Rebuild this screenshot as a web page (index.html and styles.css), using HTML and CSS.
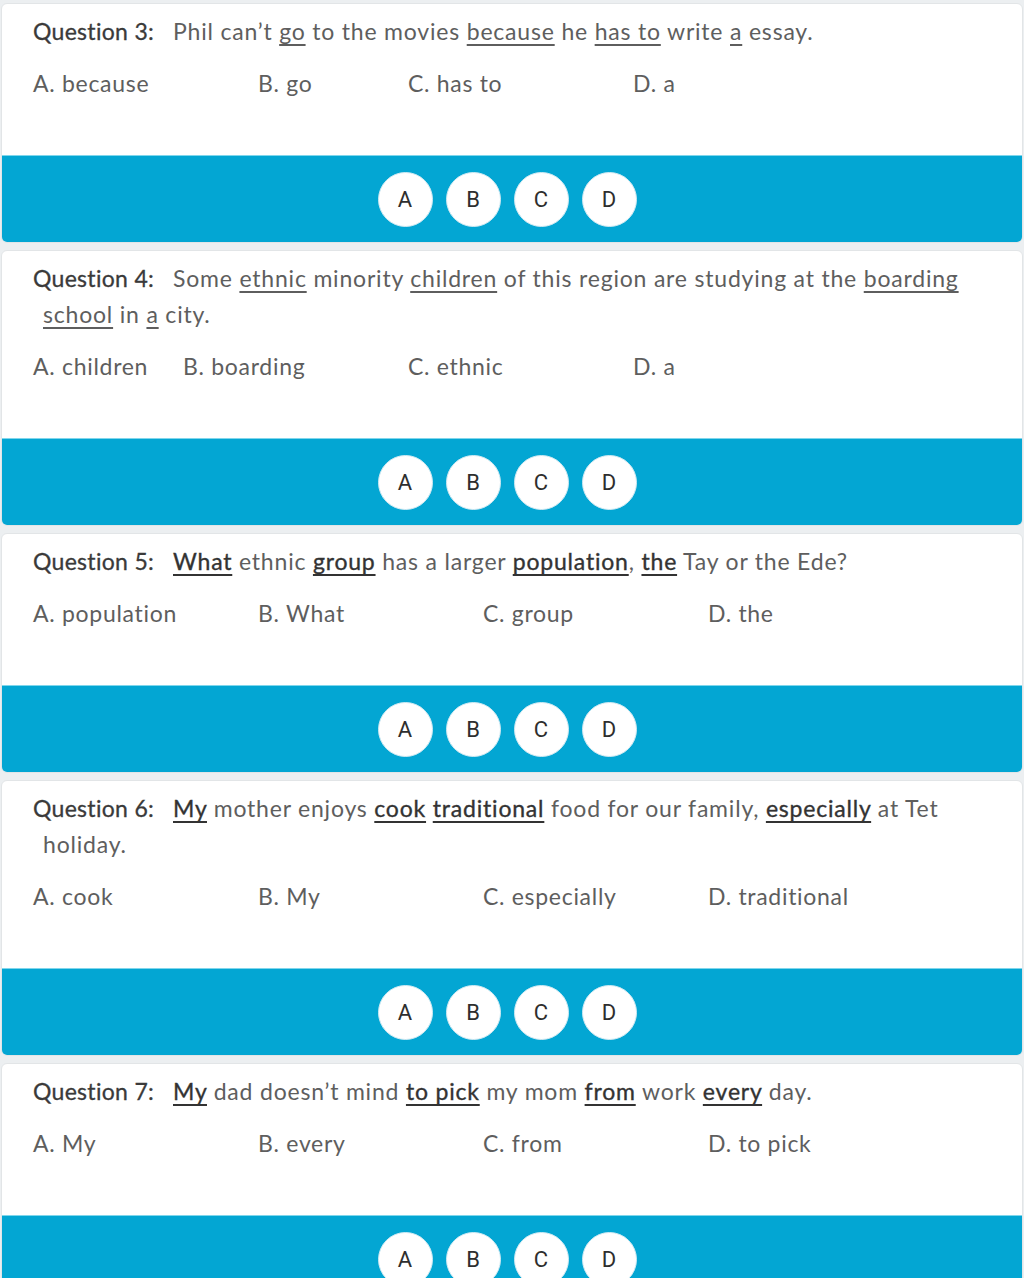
FILE: index.html
```html
<!DOCTYPE html>
<html lang="en">
<head>
<meta charset="utf-8">
<title>Quiz</title>
<link rel="stylesheet" href="styles.css">
</head>
<body>
<div class="list">
  <section class="card">
    <div class="body">
      <p class="q"><span class="label">Question 3:</span>Phil can’t <span class="u">go</span> to the movies <span class="u">because</span> he <span class="u">has to</span> write <span class="u">a</span> essay.</p>
      <div class="opts">
        <span class="opt c1">A. because</span>
        <span class="opt c4">B. go</span>
        <span class="opt c6">C. has to</span>
        <span class="opt c9">D. a</span>
      </div>
    </div>
    <div class="bar">
      <span class="btn">A</span><span class="btn">B</span><span class="btn">C</span><span class="btn">D</span>
    </div>
  </section>

  <section class="card">
    <div class="body">
      <p class="q"><span class="label">Question 4:</span>Some <span class="u">ethnic</span> minority <span class="u">children</span> of this region are studying at the <span class="u">boarding</span> <span class="u">school</span> in <span class="u">a</span> city.</p>
      <div class="opts">
        <span class="opt c1">A. children</span>
        <span class="opt c3">B. boarding</span>
        <span class="opt c6">C. ethnic</span>
        <span class="opt c9">D. a</span>
      </div>
    </div>
    <div class="bar">
      <span class="btn">A</span><span class="btn">B</span><span class="btn">C</span><span class="btn">D</span>
    </div>
  </section>

  <section class="card">
    <div class="body">
      <p class="q"><span class="label">Question 5:</span><span class="ud">What</span> ethnic <span class="ud">group</span> has a larger <span class="ud">population</span>, <span class="ud">the</span> Tay or the Ede?</p>
      <div class="opts">
        <span class="opt c1">A. population</span>
        <span class="opt c4">B. What</span>
        <span class="opt c7">C. group</span>
        <span class="opt c10">D. the</span>
      </div>
    </div>
    <div class="bar">
      <span class="btn">A</span><span class="btn">B</span><span class="btn">C</span><span class="btn">D</span>
    </div>
  </section>

  <section class="card">
    <div class="body">
      <p class="q"><span class="label">Question 6:</span><span class="ud">My</span> mother enjoys <span class="ud">cook</span> <span class="ud">traditional</span> food for our family, <span class="ud">especially</span> at Tet holiday.</p>
      <div class="opts">
        <span class="opt c1">A. cook</span>
        <span class="opt c4">B. My</span>
        <span class="opt c7">C. especially</span>
        <span class="opt c10">D. traditional</span>
      </div>
    </div>
    <div class="bar">
      <span class="btn">A</span><span class="btn">B</span><span class="btn">C</span><span class="btn">D</span>
    </div>
  </section>

  <section class="card">
    <div class="body">
      <p class="q"><span class="label">Question 7:</span><span class="ud">My</span> dad doesn’t mind <span class="ud">to pick</span> my mom <span class="ud">from</span> work <span class="ud">every</span> day.</p>
      <div class="opts">
        <span class="opt c1">A. My</span>
        <span class="opt c4">B. every</span>
        <span class="opt c7">C. from</span>
        <span class="opt c10">D. to pick</span>
      </div>
    </div>
    <div class="bar">
      <span class="btn">A</span><span class="btn">B</span><span class="btn">C</span><span class="btn">D</span>
    </div>
  </section>
</div>
</body>
</html>
```

FILE: styles.css
```css
html, body {
  margin: 0;
  padding: 0;
  background: #eceff1;
}
body {
  font-family: "Lato", "Open Sans", sans-serif;
  color: #5b5b5b;
}
.list {
  display: flex;
  flex-direction: column;
  gap: 7px;
  padding: 3px 1px 0 1px;
}
.card {
  background: #ffffff;
  border: 1px solid #e2e5e7;
  border-radius: 6px;
  overflow: hidden;
}
.body {
  padding: 9px 0 54px 0;
}
.q {
  margin: 0;
  padding-left: 41px;
  padding-right: 30px;
  text-indent: -10px;
  font-size: 23px;
  line-height: 36px;
  letter-spacing: 0.8px;
  color: #5e5e5e;
}
.label {
  display: inline-block;
  width: 140px;
  text-indent: 0;
  color: #3a3a3a;
  font-weight: 400;
  letter-spacing: 0.3px;
  -webkit-text-stroke: 0.3px #3a3a3a;
}
.u {
  text-decoration: underline;
  text-underline-offset: 4px;
  text-decoration-thickness: 1.5px;
}
.ud {
  color: #333333;
  -webkit-text-stroke: 0.35px #333333;
  text-decoration: underline;
  text-underline-offset: 4px;
  text-decoration-thickness: 2px;
}
.opts {
  margin-top: 17px;
  display: grid;
  grid-template-columns: repeat(13, 75px);
  padding-left: 31px;
  font-size: 23px;
  line-height: 35px;
  letter-spacing: 0.7px;
  color: #5e5e5e;
}
.opt { white-space: nowrap; }
.c1 { grid-column: 1 / span 2; }
.c3 { grid-column: 3 / span 2; }
.c4 { grid-column: 4 / span 2; }
.c6 { grid-column: 6 / span 2; }
.c7 { grid-column: 7 / span 2; }
.c9 { grid-column: 9 / span 2; }
.c10 { grid-column: 10 / span 3; }
.bar {
  background: #03a6d3;
  border-top: 1px solid #7fd6ec;
  height: 86px;
  display: flex;
  align-items: center;
  justify-content: center;
  gap: 13px;
  padding-right: 10px;
}
.btn {
  width: 53px;
  height: 53px;
  border-radius: 50%;
  background: #ffffff;
  border: 1.5px solid #cfe9f2;
  display: flex;
  align-items: center;
  justify-content: center;
  font-family: "Roboto", sans-serif;
  font-size: 22px;
  letter-spacing: 0;
  color: #2e2e2e;
}
```
